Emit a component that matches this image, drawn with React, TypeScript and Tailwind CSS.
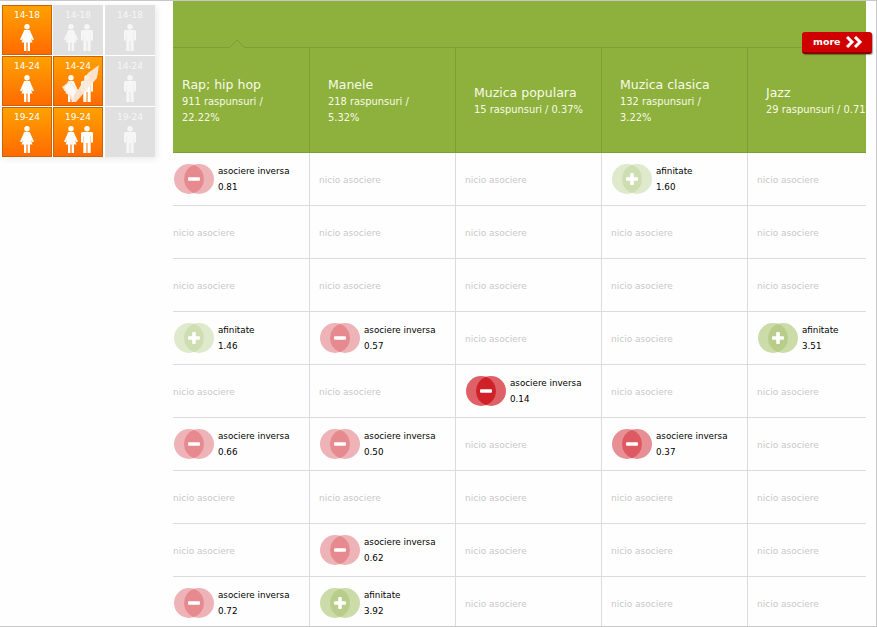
const font = "[font-family:'DejaVu_Sans',Verdana,sans-serif]";

function Female() {
  return (
    <svg width="14" height="27" viewBox="0 0 14 27" fill="currentColor">
      <circle cx="7" cy="2.7" r="2.7" />
      <path d="M4.2 6h5.6l1.2 3 3 6.4-1.7.8L10.8 14l1.7 4.5H10V27H7.6v-8.5H6.4V27H4v-8.5H1.5L3.2 14l-1.5 2.2L0 15.4 3 9z" />
    </svg>
  );
}

function Male() {
  return (
    <svg width="12" height="27" viewBox="0 0 12 27" fill="currentColor">
      <circle cx="6" cy="2.7" r="2.7" />
      <path d="M1 6h10l1 1v9.5H10V10h-.3v17H6.5V17h-1v10H2.300V10H2v6.500H0V7z" />
    </svg>
  );
}

type Age = { label: string; on: boolean; people: "f" | "m" | "fm"; check?: boolean };

const ages: Age[] = [
  { label: "14-18", on: true, people: "f" },
  { label: "14-18", on: false, people: "fm" },
  { label: "14-18", on: false, people: "m" },
  { label: "14-24", on: true, people: "f" },
  { label: "14-24", on: true, people: "fm", check: true },
  { label: "14-24", on: false, people: "m" },
  { label: "19-24", on: true, people: "f" },
  { label: "19-24", on: true, people: "fm" },
  { label: "19-24", on: false, people: "m" },
];

function AgeCell({ age }: { age: Age }) {
  return (
    <div
      className={
        age.on
          ? "relative h-[50px] w-[50px] border border-[#c9640a] bg-gradient-to-b from-[#ffa000] to-[#ff6a00] text-white"
          : "relative h-[50px] w-[50px] border border-[#e0e0e0] bg-[#e0e0e0] text-[#f6f6f6]"
      }
    >
      <div className="flex flex-col items-center pt-[2px] text-[9px] leading-[14px] font-medium">
        {age.label}
        <div className="mt-[2px] flex gap-[3px]">
          {age.people !== "m" && <Female />}
          {age.people !== "f" && <Male />}
        </div>
      </div>
      {age.check && (
        <svg className="absolute top-[7px] left-[7px]" width="40" height="40" viewBox="0 0 40 40">
          <path d="M1 23l8-6 8 9L27 9 38 1l-2 13-21 24h-3z" fill="#fbe9dc" fillOpacity="0.92" />
          <path d="M3 23.500l6-4.500 6 8-3 7z" fill="#fff" fillOpacity="0.7" />
        </svg>
      )}
    </div>
  );
}

type Assoc = { kind: "inv" | "af"; value: string; outer: string; inner: string } | null;

const inv = (value: string, outer = "#eeb3b7", inner = "#e78a90"): Assoc => ({ kind: "inv", value, outer, inner });
const af = (value: string, outer = "#dfe9cb", inner = "#cfdeb2"): Assoc => ({ kind: "af", value, outer, inner });
const strongAf = (value: string) => af(value, "#cbdca8", "#b7cd89");

const columns = [
  { title: "Rap; hip hop", sub: "911 raspunsuri /", sub2: "22.22%" },
  { title: "Manele", sub: "218 raspunsuri /", sub2: "5.32%" },
  { title: "Muzica populara", sub: "15 raspunsuri / 0.37%" },
  { title: "Muzica clasica", sub: "132 raspunsuri /", sub2: "3.22%" },
  { title: "Jazz", sub: "29 raspunsuri / 0.71%" },
];

const rows: Assoc[][] = [
  [inv("0.81"), null, null, af("1.60"), null],
  [null, null, null, null, null],
  [null, null, null, null, null],
  [af("1.46"), inv("0.57"), null, null, strongAf("3.51")],
  [null, null, inv("0.14", "#de6168", "#d02028"), null, null],
  [inv("0.66"), inv("0.50"), null, inv("0.37", "#e88f95", "#de5a62"), null],
  [null, null, null, null, null],
  [null, inv("0.62"), null, null, null],
  [inv("0.72"), strongAf("3.92"), null, null, null],
];

function Venn({ a }: { a: NonNullable<Assoc> }) {
  return (
    <svg width="40" height="30" viewBox="0 0 40 30" className="shrink-0">
      <circle cx="15" cy="15" r="15" fill={a.outer} />
      <circle cx="25" cy="15" r="15" fill={a.outer} />
      <path d="M20 .86a15 15 0 0 1 0 28.28a15 15 0 0 1 0-28.280z" fill={a.inner} />
      <rect x="14" y="13.200" width="12" height="3.600" rx="1" fill="#fff" />
      {a.kind === "af" && <rect x="18.200" y="9" width="3.600" height="12" rx="1" fill="#fff" />}
    </svg>
  );
}

function Cell({ a }: { a: Assoc }) {
  if (!a) {
    return (
      <div className="flex h-[53px] w-[146px] shrink-0 items-center border-r border-b border-[#dcdcdc] pt-[4px] pl-[9px] text-[9px] text-[#c8c8c8]">
        nicio asociere
      </div>
    );
  }
  return (
    <div className="flex h-[53px] w-[146px] shrink-0 items-center gap-[4px] border-r border-b border-[#dcdcdc] pl-[10px]">
      <Venn a={a} />
      <div className="text-[8.75px] leading-[16px] text-black">
        <div className="whitespace-nowrap">{a.kind === "inv" ? "asociere inversa" : "afinitate"}</div>
        <div>{a.value}</div>
      </div>
    </div>
  );
}

export default function App() {
  return (
    <div className={`relative flex h-[627px] w-[877px] overflow-hidden border-t border-r border-b border-[#c8c8c8] bg-[#fefefe] ${font}`}>
      <div className="w-[173px] shrink-0 pt-1 pl-[2px]">
        <div className="grid w-[153px] grid-cols-[51px_52px_50px] grid-rows-[51px_51px_50px] bg-white shadow-[2px_2px_6px_rgba(0,0,0,0.08)]">
          {ages.map((age, i) => (
            <AgeCell key={i} age={age} />
          ))}
        </div>
      </div>

      <div className="h-full w-[693px] shrink-0 overflow-hidden">
        <div className="relative h-[47px] border-b border-[#7b9e36] bg-[#8eb03c]">
          <svg className="absolute bottom-[-1px] left-[56px]" width="16" height="8" viewBox="0 0 16 8">
            <path d="M0 8L8 0l8 8" fill="#8eb03c" stroke="#7b9e36" />
          </svg>
        </div>

        <div className="-ml-[9px] w-[740px]">
          <div className="flex">
            {columns.map((c) => (
              <div
                key={c.title}
                className="flex h-[105px] w-[146px] shrink-0 flex-col justify-center border-r border-b border-[#7b9e36] bg-[#8eb03c] pt-[1px] pl-[18px] text-[#f7fbe8]"
              >
                <div className="text-[12.5px] leading-[18px] whitespace-nowrap">{c.title}</div>
                <div className="text-[9.9px] leading-[16px] whitespace-nowrap">{c.sub}</div>
                {c.sub2 && <div className="text-[9.9px] leading-[16px]">{c.sub2}</div>}
              </div>
            ))}
          </div>
          {rows.map((row, i) => (
            <div key={i} className="flex">
              {row.map((a, j) => (
                <Cell key={j} a={a} />
              ))}
            </div>
          ))}
        </div>
      </div>

      <div className="absolute top-[31px] left-[802px] flex h-[22px] w-[70px] items-center gap-[5px] rounded-[3px] border-b-2 border-[#8d0000] bg-[#d00000] pl-[11px] text-[9.5px] font-bold text-white shadow-[1px_1px_1px_rgba(0,0,0,0.35)]">
        more
        <svg width="17" height="12" viewBox="0 0 17 12" fill="none" stroke="#fff" strokeWidth="3">
          <path d="M1 1l5 5-5 5M9 1l5 5-5 5" />
        </svg>
      </div>
    </div>
  );
}
